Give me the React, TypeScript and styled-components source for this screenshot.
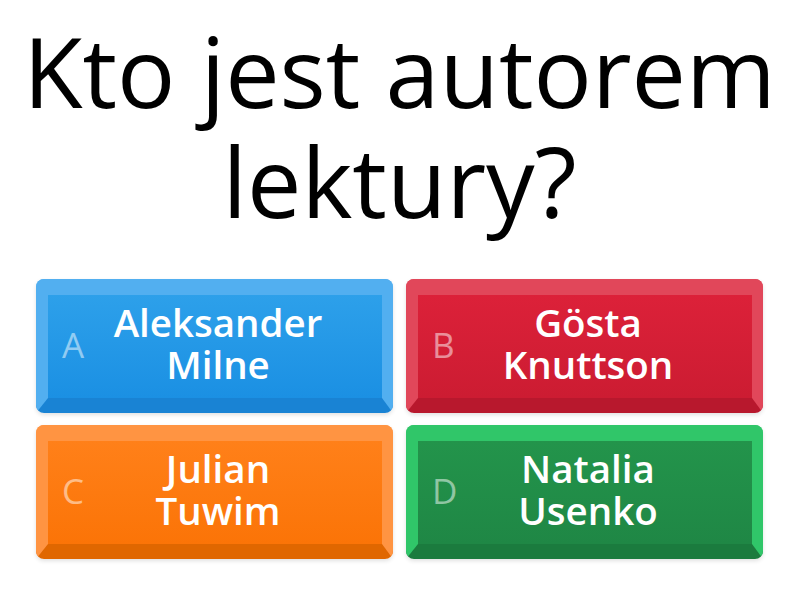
import styled, { createGlobalStyle } from 'styled-components'

const GlobalStyle = createGlobalStyle`
  html, body {
    margin: 0;
    padding: 0;
    background: #ffffff;
  }
  body {
    font-family: 'Open Sans', 'Noto Sans', sans-serif;
  }
`

type Tone = {
  bevel: string
  faceTop: string
  faceBottom: string
  shade: string
}

const tones: Record<string, Tone> = {
  blue: { bevel: '#52aff0', faceTop: '#2da0ea', faceBottom: '#1b90e3', shade: '#1983d4' },
  red: { bevel: '#e1475a', faceTop: '#dc2139', faceBottom: '#cc1c32', shade: '#b8182d' },
  orange: { bevel: '#ff9442', faceTop: '#ff8019', faceBottom: '#fb7407', shade: '#e06700' },
  green: { bevel: '#30c669', faceTop: '#23944b', faceBottom: '#1f8745', shade: '#1b7b3e' },
}

const Page = styled.div`
  width: 800px;
  height: 600px;
  display: flex;
  flex-direction: column;
  box-sizing: border-box;
  padding: 15px 37px 0 36px;
`

const Question = styled.h1`
  margin: 0 -20px 44px;
  text-align: center;
  font-weight: 400;
  font-size: 97px;
  line-height: 110px;
  color: #000;
`

const Answers = styled.div`
  display: grid;
  grid-template-columns: 1fr 1fr;
  grid-auto-rows: 134px;
  column-gap: 13px;
  row-gap: 12px;
`

const Key = styled.button<{ $tone: Tone }>`
  display: grid;
  grid-template-columns: 36px 1fr 44px;
  align-items: center;
  box-sizing: border-box;
  padding: 0 0 8px 14px;
  border-style: solid;
  border-width: 16px 11px 15px 12px;
  border-color: ${({ $tone }) => `${$tone.bevel} ${$tone.bevel} ${$tone.shade} ${$tone.bevel}`};
  border-radius: 8px;
  background: linear-gradient(180deg, ${({ $tone }) => $tone.faceTop}, ${({ $tone }) => $tone.faceBottom});
  box-shadow: 0 2px 4px rgba(0, 0, 0, 0.12);
  font-family: inherit;
  cursor: pointer;
  color: #fff;
`

const Letter = styled.span`
  margin-top: 4px;
  font-size: 35px;
  font-weight: 400;
  color: rgba(255, 255, 255, 0.5);
  text-align: left;
  line-height: 1;
`

const Label = styled.span`
  font-size: 38.5px;
  font-weight: 600;
  line-height: 42px;
  text-align: center;
  color: #fff;
`

const answers = [
  { letter: 'A', lines: ['Aleksander', 'Milne'], tone: tones.blue },
  { letter: 'B', lines: ['Gösta', 'Knuttson'], tone: tones.red },
  { letter: 'C', lines: ['Julian', 'Tuwim'], tone: tones.orange },
  { letter: 'D', lines: ['Natalia', 'Usenko'], tone: tones.green },
]

export default function App() {
  return (
    <>
      <GlobalStyle />
      <Page>
        <Question>
          Kto jest autorem
          <br />
          lektury?
        </Question>
        <Answers>
          {answers.map((a) => (
            <Key key={a.letter} $tone={a.tone}>
              <Letter>{a.letter}</Letter>
              <Label>
                {a.lines[0]}
                <br />
                {a.lines[1]}
              </Label>
              <span />
            </Key>
          ))}
        </Answers>
      </Page>
    </>
  )
}
